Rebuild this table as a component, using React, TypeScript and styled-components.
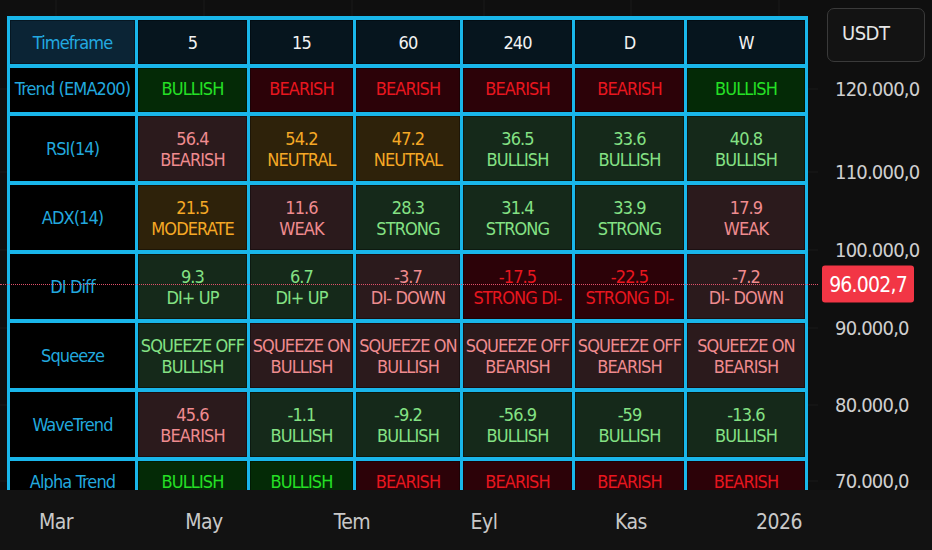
import styled, { createGlobalStyle } from "styled-components"

const GlobalStyle = createGlobalStyle`
  html, body { margin: 0; padding: 0; background: #0f0f0f; }
  body {
    font-family: "DejaVu Sans Condensed", "DejaVu Sans", sans-serif;
    font-stretch: condensed;
  }
`

type Tone = "bull" | "bear" | "softBull" | "softBear" | "neutral"

const tones: Record<Tone, { bg: string; fg: string }> = {
  bull: { bg: "#042a06", fg: "#25e025" },
  bear: { bg: "#2c0208", fg: "#e8161f" },
  softBull: { bg: "#15291a", fg: "#84e184" },
  softBear: { bg: "#2b1a1c", fg: "#ef8b8f" },
  neutral: { bg: "#2e220a", fg: "#f5a825" },
}

type CellData = { lines: string[]; tone: Tone }
type RowData = { label: string; cells: CellData[]; tall: boolean }

const c = (tone: Tone, ...lines: string[]): CellData => ({ lines, tone })

const headers = ["5", "15", "60", "240", "D", "W"]

const rows: RowData[] = [
  { label: "Trend (EMA200)", tall: false, cells: [c("bull", "BULLISH"), c("bear", "BEARISH"), c("bear", "BEARISH"), c("bear", "BEARISH"), c("bear", "BEARISH"), c("bull", "BULLISH")] },
  { label: "RSI(14)", tall: true, cells: [c("softBear", "56.4", "BEARISH"), c("neutral", "54.2", "NEUTRAL"), c("neutral", "47.2", "NEUTRAL"), c("softBull", "36.5", "BULLISH"), c("softBull", "33.6", "BULLISH"), c("softBull", "40.8", "BULLISH")] },
  { label: "ADX(14)", tall: true, cells: [c("neutral", "21.5", "MODERATE"), c("softBear", "11.6", "WEAK"), c("softBull", "28.3", "STRONG"), c("softBull", "31.4", "STRONG"), c("softBull", "33.9", "STRONG"), c("softBear", "17.9", "WEAK")] },
  { label: "DI Diff", tall: true, cells: [c("softBull", "9.3", "DI+ UP"), c("softBull", "6.7", "DI+ UP"), c("softBear", "-3.7", "DI- DOWN"), c("bear", "-17.5", "STRONG DI-"), c("bear", "-22.5", "STRONG DI-"), c("softBear", "-7.2", "DI- DOWN")] },
  { label: "Squeeze", tall: true, cells: [c("softBull", "SQUEEZE OFF", "BULLISH"), c("softBear", "SQUEEZE ON", "BULLISH"), c("softBear", "SQUEEZE ON", "BULLISH"), c("softBear", "SQUEEZE OFF", "BEARISH"), c("softBear", "SQUEEZE OFF", "BEARISH"), c("softBear", "SQUEEZE ON", "BEARISH")] },
  { label: "WaveTrend", tall: true, cells: [c("softBear", "45.6", "BEARISH"), c("softBull", "-1.1", "BULLISH"), c("softBull", "-9.2", "BULLISH"), c("softBull", "-56.9", "BULLISH"), c("softBull", "-59", "BULLISH"), c("softBull", "-13.6", "BULLISH")] },
  { label: "Alpha Trend", tall: false, cells: [c("bull", "BULLISH"), c("bull", "BULLISH"), c("bear", "BEARISH"), c("bear", "BEARISH"), c("bear", "BEARISH"), c("bear", "BEARISH")] },
]

const prices = [
  { text: "120.000,0", y: 89 },
  { text: "110.000,0", y: 172 },
  { text: "100.000,0", y: 250 },
  { text: "90.000,0", y: 328 },
  { text: "80.000,0", y: 405 },
  { text: "70.000,0", y: 481 },
]

const months = [
  { text: "Mar", x: 56 },
  { text: "May", x: 204 },
  { text: "Tem", x: 352 },
  { text: "Eyl", x: 484 },
  { text: "Kas", x: 631 },
  { text: "2026", x: 779 },
]

const LAST_Y = 284

const App = () => {
  return (
    <Screen>
      <GlobalStyle />
      <Main>
        <Pane>
          <Grid width="818" height="490">
            {months.map((m) => (
              <line key={m.text} x1={m.x} y1={0} x2={m.x} y2={490} stroke="#1b1b1b" strokeWidth={1} />
            ))}
            {prices.map((p) => (
              <line key={p.text} x1={0} y1={p.y} x2={818} y2={p.y} stroke="#1b1b1b" strokeWidth={1} />
            ))}
          </Grid>
          <Table>
            <Head $first>Timeframe</Head>
            {headers.map((h) => (
              <Head key={h}>{h}</Head>
            ))}
            {rows.map((r) => (
              <Row key={r.label} $tall={r.tall}>
                <Label>{r.label}</Label>
                {r.cells.map((cell, j) => (
                  <Cell key={j} $tone={cell.tone}>
                    {cell.lines.map((l) => (
                      <span key={l}>{l}</span>
                    ))}
                  </Cell>
                ))}
              </Row>
            ))}
          </Table>
          <LastLine style={{ top: LAST_Y }} />
        </Pane>
        <PriceAxis>
          <CurrencyBox>USDT</CurrencyBox>
          {prices.map((p) => (
            <Price key={p.text} style={{ top: p.y }}>{p.text}</Price>
          ))}
          <LastPrice style={{ top: LAST_Y }}>96.002,7</LastPrice>
        </PriceAxis>
      </Main>
      <TimeAxis>
        {months.map((m) => (
          <Month key={m.text} style={{ left: m.x }}>{m.text}</Month>
        ))}
      </TimeAxis>
    </Screen>
  )
}
export default App

const Screen = styled.div`
  width: 932px;
  height: 550px;
  display: flex;
  flex-direction: column;
  background: #0f0f0f;
  overflow: hidden;
`
const Main = styled.div`
  display: flex;
  height: 490px;
`
const Pane = styled.div`
  position: relative;
  width: 818px;
  height: 490px;
  overflow: hidden;
  padding: 16px 0 0 7px;
  box-sizing: border-box;
`
const Grid = styled.svg`
  position: absolute;
  left: 0;
  top: 0;
`
const Table = styled.div`
  position: relative;
  display: grid;
  grid-template-columns: 125px 109px 103px 104px 109px 109px 118px;
  column-gap: 3px;
  row-gap: 4px;
  padding: 4px 3px;
  width: max-content;
  background: #19b6ea;
`
const Row = styled.div<{ $tall?: boolean }>`
  display: contents;
  & > * {
    height: ${(p) => (p.$tall ? "65px" : "44px")};
    line-height: ${(p) => (p.$tall ? "21px" : "18px")};
    padding-bottom: ${(p) => (p.$tall ? "0" : "3px")};
    box-sizing: border-box;
  }
`
const Box = styled.div`
  display: flex;
  flex-direction: column;
  align-items: center;
  justify-content: center;
  font-size: 18px;
  line-height: 21px;
  letter-spacing: -0.9px;
  box-shadow: inset 0 0 0 1px rgba(0, 0, 0, 0.35);
  white-space: nowrap;
`
const Head = styled(Box)<{ $first?: boolean }>`
  height: 44px;
  background: ${(p) => (p.$first ? "#0b2435" : "#06151e")};
  color: ${(p) => (p.$first ? "#22a9e0" : "#f2f2f2")};
`
const Label = styled(Box)`
  background: #000;
  color: #22a8de;
`
const Cell = styled(Box)<{ $tone: Tone }>`
  background: ${(p) => tones[p.$tone].bg};
  color: ${(p) => tones[p.$tone].fg};
`
const LastLine = styled.div`
  position: absolute;
  left: 0;
  right: 0;
  height: 0;
  border-top: 1px dotted #e0506a;
`
const PriceAxis = styled.div`
  position: relative;
  flex: 1;
  height: 490px;
`
const CurrencyBox = styled.div`
  position: absolute;
  left: 9px;
  top: 8px;
  width: 98px;
  height: 54px;
  box-sizing: border-box;
  border: 1px solid #3a3a3a;
  border-radius: 7px;
  background: #131313;
  color: #e6e6e6;
  font-size: 20px;
  letter-spacing: -0.5px;
  display: flex;
  align-items: center;
  padding: 0 0 4px 14px;
`
const Price = styled.div`
  position: absolute;
  left: 17px;
  transform: translateY(-50%);
  color: #cfcfcf;
  font-size: 20px;
  letter-spacing: -0.8px;
`
const LastPrice = styled.div`
  position: absolute;
  left: 4px;
  width: 92px;
  height: 37px;
  transform: translateY(-50%);
  background: #f23645;
  border-radius: 3px;
  color: #fff;
  font-size: 21px;
  letter-spacing: -0.8px;
  display: flex;
  align-items: center;
  justify-content: center;
`
const TimeAxis = styled.div`
  position: relative;
  height: 60px;
  background: #121212;
`
const Month = styled.div`
  position: absolute;
  top: 20px;
  transform: translateX(-50%);
  color: #c8c8c8;
  font-size: 21px;
  letter-spacing: -0.5px;
`
